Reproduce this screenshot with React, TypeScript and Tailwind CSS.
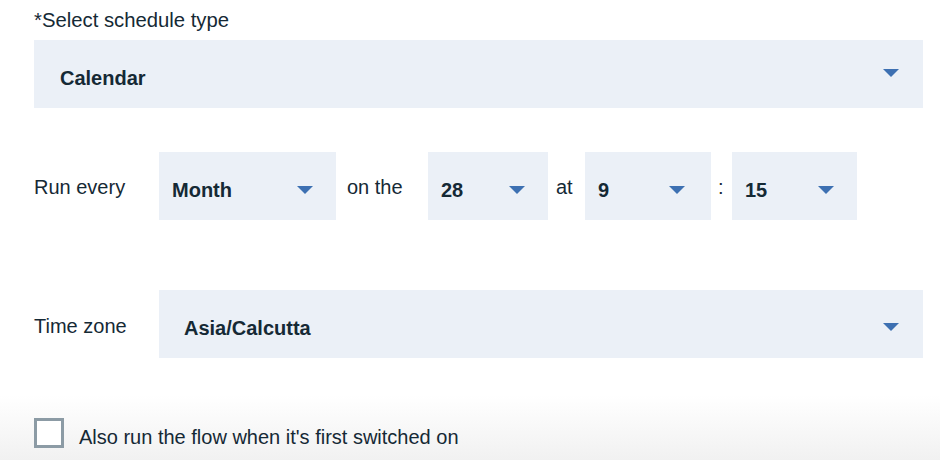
import React from "react";

const Arrow = ({ offset }: { offset: string }) => (
  <svg width="16" height="8" viewBox="0 0 16 8" className={`shrink-0 ${offset}`}>
    <polygon points="0,0 16,0 8,8" fill="#3d70b2" />
  </svg>
);

const Select = ({
  value,
  className,
  pl = "pl-[13px]",
  pr = "pr-[23px]",
  arrow = "mt-[7px]",
}: {
  value: string;
  className: string;
  pl?: string;
  pr?: string;
  arrow?: string;
}) => (
  <div className={`h-[68px] bg-[#ebf0f7] flex items-center justify-between ${pl} ${pr} ${className}`}>
    <span className="text-[20px] font-semibold text-[#152935] pt-[7px]">{value}</span>
    <Arrow offset={arrow} />
  </div>
);

export default function App() {
  return (
    <div
      className="w-[940px] h-[460px] overflow-hidden text-[#152935] bg-[linear-gradient(to_bottom,#ffffff_0%,#ffffff_86%,#f1f1f1_100%)]"
      style={{ fontFamily: '"Liberation Sans", Arial, sans-serif' }}
    >
      <div className="pl-[34px] w-[923px] pt-[8px]">
        <div className="text-[20.3px] leading-[24px] h-[32px]">*Select schedule type</div>
        <Select value="Calendar" className="w-full" pl="pl-[26px]" pr="pr-[24px]" arrow="mb-[3px]" />

        <div className="flex items-center mt-[44px] h-[68px]">
          <div className="w-[125px] text-[20px] pt-[2px]">Run every</div>
          <Select value="Month" className="w-[177px]" />
          <div className="text-[20px] ml-[11px] w-[81px] pt-[2px]">on the</div>
          <Select value="28" className="w-[120px]" />
          <div className="text-[20px] ml-[8px] w-[29px] pt-[2px]">at</div>
          <Select value="9" className="w-[126px]" pr="pr-[26px]" />
          <div className="text-[20px] ml-[7px] w-[14px] pt-[2px]">:</div>
          <Select value="15" className="w-[125px]" />
        </div>

        <div className="flex items-center mt-[70px] h-[68px]">
          <div className="w-[125px] text-[20px] pt-[4px]">Time zone</div>
          <Select value="Asia/Calcutta" className="flex-1" pl="pl-[25px]" pr="pr-[24px]" arrow="mt-[6px]" />
        </div>

        <div className="flex items-start mt-[60px]">
          <div className="w-[30px] h-[30px] border-[3px] border-[#8c9ba5] bg-white shrink-0" />
          <span className="ml-[15px] text-[20px] leading-[24px] pt-[7px]">Also run the flow when it's first switched on</span>
        </div>
      </div>
    </div>
  );
}
